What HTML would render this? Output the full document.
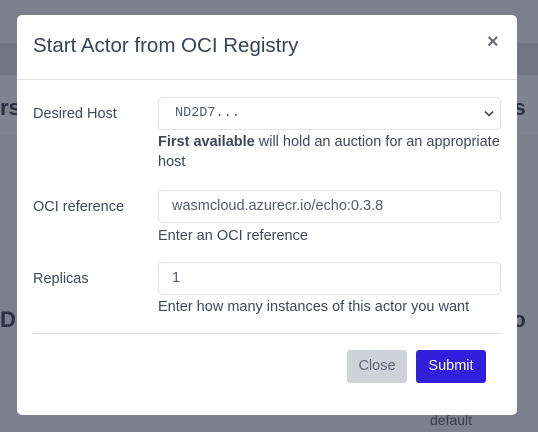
<!DOCTYPE html>
<html><head><style>
body{margin:0;width:538px;height:432px;overflow:hidden;background:#7d7f8d;font-family:"Liberation Sans",sans-serif;position:relative}
.bg{position:absolute;background:#858794}
.bgt{position:absolute;color:#2a2f45;font-weight:bold;font-size:22px}
.modal{position:absolute;left:17px;top:15px;width:500px;height:400px;background:#fff;border-radius:5px;color:#3c4257}
.title{position:absolute;left:16px;top:19px;font-size:20.5px;color:#3a4256}
.x{position:absolute;left:470px;top:16px;font-size:20px;font-weight:bold;color:#6a6f7c}
.hline{position:absolute;left:0;top:64px;width:500px;height:1px;background:#e2e4e8}
.lbl{position:absolute;left:16px;font-size:14.5px;color:#3f4759}
.inp{position:absolute;left:141px;width:343px;height:33px;border:1px solid #dfe2e6;border-radius:4px;box-sizing:border-box;font-size:14.5px;color:#555c6b;padding-left:13px;line-height:31px}
.help{position:absolute;left:141px;font-size:14.5px;color:#3f4759;line-height:20px;width:345px}
.btn{position:absolute;top:335px;height:33px;border-radius:3px;font-size:14.5px;line-height:33px;text-align:center}
</style></head><body>
<div class="bg" style="left:0;top:43px;width:538px;height:32px;background:#737583"></div>
<div class="bg" style="left:0;top:75px;width:538px;height:60px;background:#80828f"></div>
<div class="bgt" style="left:0;top:95px">rs</div>
<div class="bgt" style="left:505px;top:95px">rs</div>
<div class="bgt" style="left:0;top:307px">D</div>
<div class="bgt" style="left:505px;top:307px">fo</div>
<div style="position:absolute;left:430px;top:412px;font-size:14px;color:#3a3f50">default</div>
<div class="modal">
<div class="title">Start Actor from OCI Registry</div>
<div class="x">×</div>
<div class="hline"></div>
<div class="lbl" style="top:91px">Desired Host</div>
<div class="inp" style="top:82px;font-family:'Liberation Mono',monospace;font-size:13.5px;padding-left:16px">ND2D7...<svg style="position:absolute;right:6px;top:12px" width="10" height="7" viewBox="0 0 10 7"><path d="M1 1.5 L5 5.5 L9 1.5" fill="none" stroke="#444a58" stroke-width="1.6"/></svg></div>
<div class="help" style="top:117px"><b>First available</b> will hold an auction for an appropriate host</div>
<div class="lbl" style="top:184px">OCI reference</div>
<div class="inp" style="top:175px">wasmcloud.azurecr.io/echo:0.3.8</div>
<div class="help" style="top:211px">Enter an OCI reference</div>
<div class="lbl" style="top:256px">Replicas</div>
<div class="inp" style="top:247px">1</div>
<div class="help" style="top:282px">Enter how many instances of this actor you want</div>
<div class="hline" style="left:16px;width:468px;top:318px;background:#dcdee2"></div>
<div class="btn" style="left:330px;width:60px;background:#cfd2d9;color:#5f6575">Close</div>
<div class="btn" style="left:399px;width:70px;background:#321fdb;color:#fff">Submit</div>
</div>
</body></html>
